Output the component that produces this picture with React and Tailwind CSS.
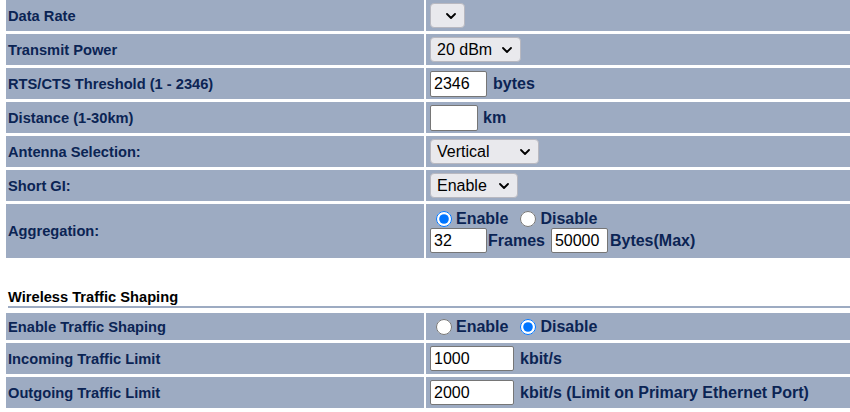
import React from 'react';

const navy = 'text-[#0b2454]';

const Chevron = () => (
  <svg width="10" height="6" viewBox="0 0 10 6" className="shrink-0">
    <path d="M1 1l4 4 4-4" fill="none" stroke="#000" strokeWidth="1.8" strokeLinecap="round" strokeLinejoin="round" />
  </svg>
);

const Select = ({ value, w }) => (
  <div className={`${w} h-[25px] rounded-[4px] border border-[#b8b8c0] bg-[#e9e9ed] flex items-center justify-between pl-[6px] pr-[8px] text-[16px] text-black`}>
    <span>{value}</span>
    <Chevron />
  </div>
);

const TextBox = ({ value, w, h = 'h-[26px]' }) => (
  <input
    readOnly
    value={value}
    className={`${w} ${h} border border-[#767676] rounded-[2px] bg-white px-[3px] text-[16px] text-black outline-none`}
  />
);

const Radio = ({ checked, label }) => (
  <label className="flex items-center">
    <input type="radio" readOnly checked={checked} className="w-[16px] h-[16px] m-0 ml-[6px] mr-[4px] accent-[#0075ff]" />
    <span className={`font-bold text-[16px] ${navy}`}>{label}</span>
  </label>
);

const Row = ({ label, h = 'h-[31px]', children, col }) => (
  <>
    <div className={`${h} bg-[#9dabc2] flex items-center pl-[2px] font-bold text-[11pt] ${navy}`}>{label}</div>
    <div className={`${h} bg-[#9dabc2] flex ${col ? 'flex-col justify-center items-start' : 'items-center'} pl-[4px]`}>{children}</div>
  </>
);

const Unit = ({ children, gap = 'ml-[6px]' }) => (
  <span className={`${gap} font-bold text-[16px] ${navy}`}>{children}</span>
);

export default function App() {
  return (
    <div className="w-[850px] h-[412px] overflow-hidden bg-white" style={{ fontFamily: '"Liberation Sans", Arial, sans-serif' }}>
      <div className="grid grid-cols-[418px_1fr] gap-x-[2px] gap-y-[3px] pl-[6px]">
        <Row label="Data Rate">
          <Select value="" w="w-[35px]" />
        </Row>
        <Row label="Transmit Power">
          <Select value="20 dBm" w="w-[91px]" />
        </Row>
        <Row label="RTS/CTS Threshold (1 - 2346)">
          <TextBox value="2346" w="w-[57px]" />
          <Unit>bytes</Unit>
        </Row>
        <Row label="Distance (1-30km)">
          <TextBox value="" w="w-[48px]" />
          <Unit gap="ml-[5px]">km</Unit>
        </Row>
        <Row label="Antenna Selection:">
          <Select value="Vertical" w="w-[109px]" />
        </Row>
        <Row label="Short GI:">
          <Select value="Enable" w="w-[88px]" />
        </Row>
        <Row label="Aggregation:" h="h-[54px]" col>
          <div className="h-[19px] flex items-center gap-[6px]">
            <Radio checked label="Enable" />
            <Radio checked={false} label="Disable" />
          </div>
          <div className="h-[25px] flex items-center">
            <TextBox value="32" w="w-[57px]" h="h-[25px]" />
            <Unit gap="ml-[1px]">Frames</Unit>
            <span className="w-[6px]" />
            <TextBox value="50000" w="w-[57px]" h="h-[25px]" />
            <Unit gap="ml-[2px]">Bytes(Max)</Unit>
          </div>
        </Row>
      </div>

      <div className="mt-[31px] ml-[8px] leading-[17px] border-b-2 border-[#9dabc2] font-bold text-[11pt] text-black">
        Wireless Traffic Shaping
      </div>

      <div className="mt-[5px] grid grid-cols-[418px_1fr] gap-x-[2px] gap-y-[3px] pl-[6px]">
        <Row label="Enable Traffic Shaping" h="h-[27px]">
          <div className="flex items-center gap-[6px]">
            <Radio checked={false} label="Enable" />
            <Radio checked label="Disable" />
          </div>
        </Row>
        <Row label="Incoming Traffic Limit">
          <TextBox value="1000" w="w-[84px]" h="h-[25px]" />
          <Unit>kbit/s</Unit>
        </Row>
        <Row label="Outgoing Traffic Limit">
          <TextBox value="2000" w="w-[84px]" h="h-[25px]" />
          <Unit>kbit/s (Limit on Primary Ethernet Port)</Unit>
        </Row>
      </div>
    </div>
  );
}
